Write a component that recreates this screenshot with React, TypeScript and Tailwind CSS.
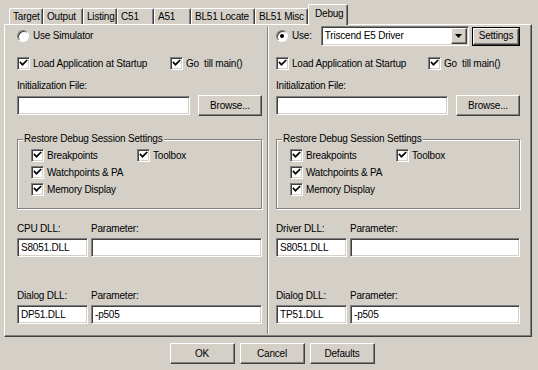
import React from 'react';

const TABS = [
  { label: 'Target', w: 'w-[34px]' },
  { label: 'Output', w: 'w-[40px]' },
  { label: 'Listing', w: 'w-[34px]' },
  { label: 'C51', w: 'w-[37px]' },
  { label: 'A51', w: 'w-[37px]' },
  { label: 'BL51 Locate', w: 'w-[64px]' },
  { label: 'BL51 Misc', w: 'w-[53px]' },
];

const sunken =
  'border border-t-[#808080] border-l-[#808080] border-b-white border-r-white shadow-[inset_1px_1px_0_#404040,inset_-1px_-1px_0_#d4d0c8]';
const raised =
  'border border-t-white border-l-white border-b-[#404040] border-r-[#404040] shadow-[inset_-1px_-1px_0_#808080]';

function Check({ label, className = '' }: { label: string; className?: string }) {
  return (
    <div className={`flex items-center h-[17px] ${className}`}>
      <div className={`w-[13px] h-[13px] bg-white shrink-0 flex items-center justify-center ${sunken}`}>
        <svg width="9" height="9" viewBox="0 0 9 9">
          <path d="M1.5 3.5 L3.5 5.7 L7.6 1.6" stroke="#000" strokeWidth="1.7" fill="none" strokeLinecap="square" />
        </svg>
      </div>
      <span className="ml-[3px] whitespace-nowrap">{label}</span>
    </div>
  );
}

function Radio({ label, on }: { label: string; on?: boolean }) {
  return (
    <div className="flex items-center">
      <div className="w-[12px] h-[12px] rounded-full bg-white shrink-0 flex items-center justify-center border border-t-[#808080] border-l-[#808080] border-b-white border-r-white shadow-[inset_1px_1px_0_#404040]">
        {on && <div className="w-[4px] h-[4px] rounded-full bg-black" />}
      </div>
      <span className="ml-[4px] whitespace-nowrap">{label}</span>
    </div>
  );
}

function Edit({ value = '', className = '' }: { value?: string; className?: string }) {
  return (
    <div className={`h-[19px] bg-white flex items-center pl-[3px] ${sunken} ${className}`}>{value}</div>
  );
}

function Btn({ label, className = '' }: { label: string; className?: string }) {
  return (
    <div className={`h-[21px] flex items-center justify-center bg-[#d4d0c8] ${raised} ${className}`}>{label}</div>
  );
}

function Column({ right }: { right?: boolean }) {
  return (
    <div className={right ? 'w-[262px] pl-[7px] pr-[11px]' : 'w-[262px] pl-[12px] pr-[5px]'}>
      {/* top row */}
      <div className="h-[20px] mt-[1px] flex items-center">
        {right ? (
          <>
            <Radio label="Use:" on />
            <div className={`ml-[9px] w-[151px] h-[20px] bg-white flex items-center ${sunken}`}>
              <span className="pl-[3px] flex-1">Triscend E5 Driver</span>
              <div className={`w-[16px] h-[16px] mr-[1px] flex items-center justify-center bg-[#d4d0c8] ${raised}`}>
                <svg width="7" height="4" viewBox="0 0 7 4">
                  <path d="M0 0 H7 L3.5 4 Z" fill="#000" />
                </svg>
              </div>
            </div>
            <div className="ml-[3px] w-[49px] h-[19px] border border-black">
              <div className={`h-full flex items-center justify-center ${raised}`}>Settings</div>
            </div>
          </>
        ) : (
          <Radio label="Use Simulator" />
        )}
      </div>

      <div className="mt-[9px] flex items-center">
        <Check label="Load Application at Startup" className={right ? 'w-[152px]' : 'w-[153px]'} />
        <Check label={'Go\u00a0 till main()'} />
      </div>

      <div className="mt-[8px] h-[12px] flex items-center">Initialization File:</div>
      <div className="mt-[3px] flex items-center gap-[8px]">
        <Edit className="flex-1" />
        <Btn label="Browse..." className="w-[64px]" />
      </div>

      <div className="relative mt-[23px] h-[70px] border border-[#808080] shadow-[inset_1px_1px_0_#fff,1px_1px_0_#fff] pt-[7px] pl-[13px]">
        <span className="absolute -top-[7px] left-[5px] px-[1px] bg-[#d4d0c8] leading-[12px]">
          Restore Debug Session Settings
        </span>
        <div className="grid grid-cols-[106px_auto]">
          <Check label="Breakpoints" />
          <Check label="Toolbox" />
          <Check label="Watchpoints & PA" />
          <div />
          <Check label="Memory Display" />
        </div>
      </div>

      <div className="mt-[14px] grid grid-cols-[71px_1fr] gap-x-[3px]">
        <div className="h-[12px] flex items-center">{right ? 'Driver DLL:' : 'CPU DLL:'}</div>
        <div className="h-[12px] flex items-center">Parameter:</div>
        <Edit value="S8051.DLL" className="mt-[3px]" />
        <Edit className="mt-[3px]" />
      </div>

      <div className="mt-[33px] grid grid-cols-[71px_1fr] gap-x-[3px]">
        <div className="h-[12px] flex items-center">Dialog DLL:</div>
        <div className="h-[12px] flex items-center">Parameter:</div>
        <Edit value={right ? 'TP51.DLL' : 'DP51.DLL'} className="mt-[3px]" />
        <Edit value="-p505" className="mt-[3px]" />
      </div>
    </div>
  );
}

export default function App() {
  return (
    <div
      className="w-[538px] h-[370px] bg-[#d4d0c8] text-black text-[10px] tracking-[-0.2px] leading-none overflow-hidden"
      style={{ fontFamily: '"Liberation Sans", Arial, sans-serif' }}
    >
      {/* tab strip */}
      <div className="relative z-10 mt-[4px] -mb-px h-[21px] pl-[9px] flex items-end">
        {TABS.map((t) => (
          <div
            key={t.label}
            className={`${t.w} h-[16px] mb-px pl-[3px] flex items-center rounded-t-[2px] border-t border-l border-white border-r border-r-[#404040] shadow-[inset_-1px_0_0_#808080] whitespace-nowrap`}
          >
            {t.label}
          </div>
        ))}
        <div className="w-[40px] h-[21px] pl-[6px] pb-[3px] flex items-center rounded-t-[2px] bg-[#d4d0c8] border-t border-l border-white border-r border-r-[#404040] shadow-[inset_-1px_0_0_#808080]">
          Debug
        </div>
      </div>

      {/* tab page */}
      <div className="ml-[4px] w-[528px] h-[313px] flex border border-t-white border-l-white border-b-[#404040] border-r-[#404040] shadow-[inset_-1px_-1px_0_#808080]">
        <Column />
        <div className="w-[2px] my-[2px] border-l border-l-[#808080] border-r border-r-white" />
        <Column right />
      </div>

      {/* dialog buttons */}
      <div className="mt-[6px] pl-[6px] flex justify-center gap-[5px]">
        <Btn label="OK" className="w-[65px] h-[20px]" />
        <Btn label="Cancel" className="w-[65px] h-[20px]" />
        <Btn label="Defaults" className="w-[65px] h-[20px]" />
      </div>
    </div>
  );
}
